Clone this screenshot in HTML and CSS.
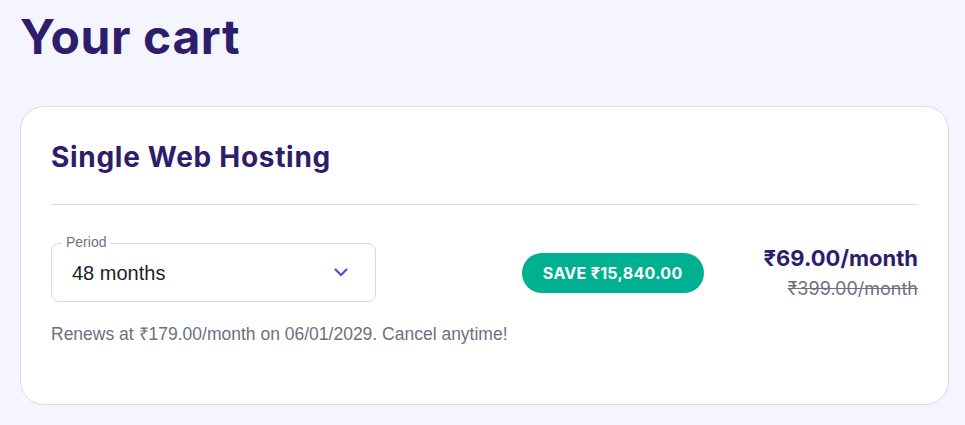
FILE: index.html
```html
<!DOCTYPE html>
<html lang="en">
<head>
<meta charset="utf-8">
<title>Your cart</title>
<link rel="stylesheet" href="styles.css">
</head>
<body>
<main class="page">
  <h1 class="page-title">Your cart</h1>
  <section class="card">
    <h2 class="card-title">Single Web Hosting</h2>
    <hr class="divider">
    <div class="row">
      <div class="select">
        <span class="select-label">Period</span>
        <span class="select-value">48 months</span>
        <svg class="chevron" width="14" height="9" viewBox="0 0 14 9" aria-hidden="true">
          <path d="M1.5 1.5 L7 7 L12.5 1.5" fill="none" stroke="#673de6" stroke-width="2.2" stroke-linecap="round" stroke-linejoin="round"/>
        </svg>
      </div>
      <div class="pricing">
        <span class="save-pill">SAVE ₹15,840.00</span>
        <div class="prices">
          <span class="price">₹69.00/month</span>
          <span class="old-price">₹399.00/month</span>
        </div>
      </div>
    </div>
    <p class="renews">Renews at ₹179.00/month on 06/01/2029. Cancel anytime!</p>
  </section>
</main>
</body>
</html>
```

FILE: styles.css
```css
html, body {
  margin: 0;
  padding: 0;
  background: #f4f5ff;
}
body {
  font-family: "Liberation Sans", Arial, sans-serif;
}
.page {
  padding: 0 16px 0 20px;
}
.page-title {
  margin: 0;
  padding-top: 5px;
  font-family: Inter, "DejaVu Sans", sans-serif;
  font-weight: 700;
  font-size: 48px;
  line-height: 64px;
  letter-spacing: 0.6px;
  color: #2f1c6a;
}
.card {
  margin-top: 37px;
  width: 929px;
  box-sizing: border-box;
  background: #fff;
  border: 1px solid #dadce0;
  border-radius: 24px;
  padding: 30px 30px 57px 30px;
}
.card-title {
  margin: 0;
  font-family: Inter, "DejaVu Sans", sans-serif;
  font-weight: 700;
  font-size: 28px;
  line-height: 40px;
  letter-spacing: 0.7px;
  color: #2f1c6a;
}
.divider {
  margin: 27px 0 0 0;
  border: 0;
  border-top: 1px solid #dadce0;
  height: 0;
}
.row {
  display: flex;
  align-items: center;
  justify-content: space-between;
  margin-top: 38px;
}
.select {
  position: relative;
  width: 325px;
  height: 59px;
  box-sizing: border-box;
  border: 1px solid #d8dae0;
  border-radius: 8px;
  display: flex;
  align-items: center;
  justify-content: space-between;
  padding: 0 27px 0 20px;
}
.select-label {
  position: absolute;
  left: 10px;
  top: -10px;
  padding: 0 4px;
  background: #fff;
  font-size: 14px;
  line-height: 17px;
  color: #6d7081;
}
.select-value {
  font-size: 20px;
  color: #1d1e20;
  padding-top: 1px;
}
.chevron {
  display: block;
}
.pricing {
  display: flex;
  align-items: center;
  gap: 60px;
}
.save-pill {
  display: inline-flex;
  align-items: center;
  height: 40px;
  padding: 0 21px;
  border-radius: 20px;
  background: #00b090;
  color: #fff;
  font-family: Inter, "DejaVu Sans", sans-serif;
  font-weight: 700;
  font-size: 16px;
  letter-spacing: 0.3px;
}
.prices {
  display: flex;
  flex-direction: column;
  align-items: flex-end;
  font-family: Inter, "DejaVu Sans", sans-serif;
}
.price {
  font-weight: 700;
  font-size: 22px;
  line-height: 28px;
  color: #2f1c6a;
}
.old-price {
  margin-top: 4px;
  font-size: 18px;
  line-height: 26px;
  color: #6d7081;
  text-decoration: line-through;
}
.renews {
  margin: 19px 0 0 0;
  font-size: 17.5px;
  line-height: 26px;
  color: #6d7081;
}
```
